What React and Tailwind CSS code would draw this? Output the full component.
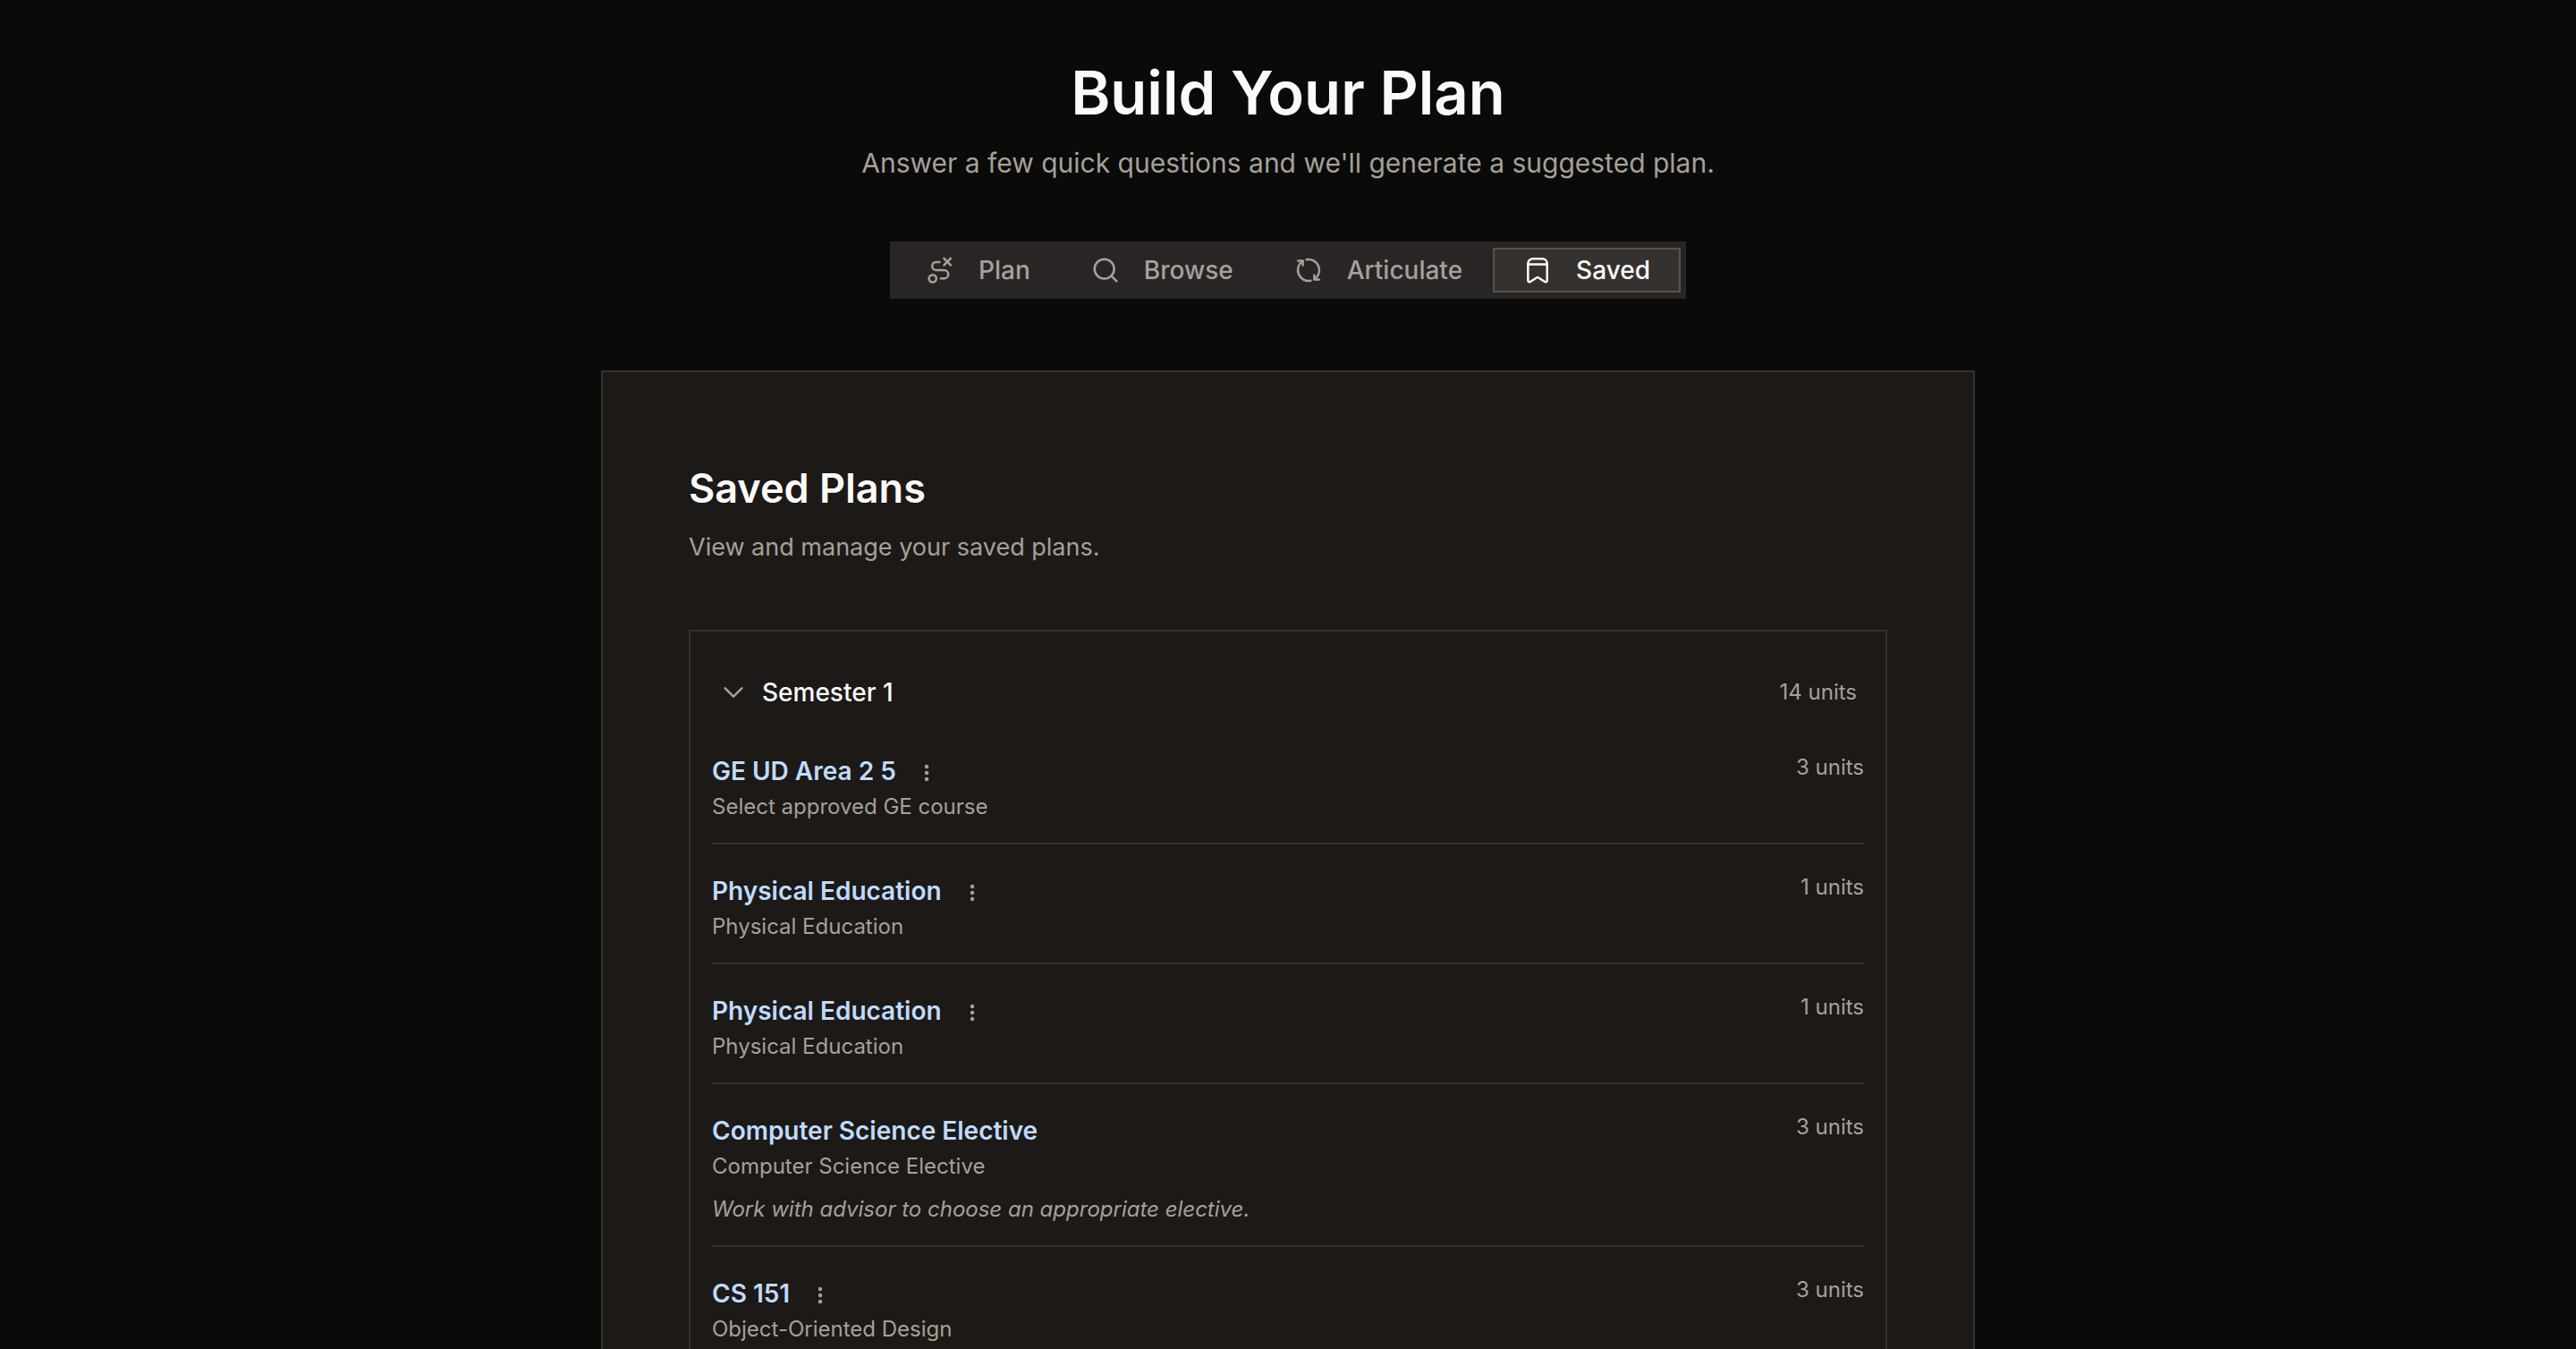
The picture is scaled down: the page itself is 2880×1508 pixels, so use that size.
import { useState } from 'react';
import clsx from 'clsx';

const TABS = [
  { id: 'plan', label: 'Plan', Icon: RouteIcon },
  { id: 'browse', label: 'Browse', Icon: SearchIcon },
  { id: 'articulate', label: 'Articulate', Icon: SyncIcon },
  { id: 'saved', label: 'Saved', Icon: BookmarkIcon },
];

const COURSES = [
  { code: 'GE UD Area 2 5', title: 'Select approved GE course', units: 3, menu: true },
  { code: 'Physical Education', title: 'Physical Education', units: 1, menu: true },
  { code: 'Physical Education', title: 'Physical Education', units: 1, menu: true },
  {
    code: 'Computer Science Elective',
    title: 'Computer Science Elective',
    units: 3,
    note: 'Work with advisor to choose an appropriate elective.',
  },
  { code: 'CS 151', title: 'Object-Oriented Design', units: 3, menu: true },
];

function Svg({ className, children }) {
  return (
    <svg
      viewBox="0 0 24 24"
      fill="none"
      stroke="currentColor"
      strokeWidth="1.9"
      strokeLinecap="round"
      strokeLinejoin="round"
      aria-hidden="true"
      className={className}
    >
      {children}
    </svg>
  );
}

function RouteIcon({ className }) {
  return (
    <Svg className={className}>
      <circle cx="5.8" cy="19" r="3.1" />
      <path d="M11.5 5.2H8.8a3.4 3.4 0 0 0 0 6.8h6.600a3.500 3.500 0 0 1 0 7h-2.800" />
      <path d="M15.3 2.2l5.6 5.6M20.900 2.200l-5.600 5.600" />
    </Svg>
  );
}

function SearchIcon({ className }) {
  return (
    <Svg className={className}>
      <circle cx="11" cy="11" r="8.2" />
      <path d="M17 17l4.3 4.3" />
    </Svg>
  );
}

function SyncIcon({ className }) {
  return (
    <Svg className={className}>
      <path d="M10.2 3.2A9 9 0 0 1 17 19.5" />
      <path d="M16.8 16.2v3.6h4" />
      <path d="M13.8 20.8A9 9 0 0 1 7 4.5" />
      <path d="M3.2 4.2h4v3.6" />
    </Svg>
  );
}

function BookmarkIcon({ className }) {
  return (
    <Svg className={className}>
      <path d="M4 6.500a4 4 0 0 1 4-4h8a4 4 0 0 1 4 4V20.600c0 1.200-1.200 1.700-2.200 1L12.600 18.200a1 1 0 0 0-1.200 0L6.200 21.600c-1 .7-2.200.2-2.200-1Z" />
      <path d="M4 7.2h16" />
    </Svg>
  );
}

function ChevronIcon({ className }) {
  return (
    <Svg className={className}>
      <path d="M5 8.5l7 7 7-7" />
    </Svg>
  );
}

function DotsIcon({ className }) {
  return (
    <svg viewBox="0 0 24 24" fill="currentColor" aria-hidden="true" className={className}>
      <circle cx="12" cy="3.6" r="2.7" />
      <circle cx="12" cy="12" r="2.7" />
      <circle cx="12" cy="20.4" r="2.7" />
    </svg>
  );
}

function CourseRow({ course }) {
  return (
    <li className="flex items-start justify-between border-b-2 border-[#33302d] pt-8 pb-5 last:border-b-0">
      <div>
        <div className="flex h-10 items-center gap-4">
          <h3 className="text-[28px] leading-10 font-semibold text-[#bfdbfe]">{course.code}</h3>
          {course.menu && (
            <button
              type="button"
              aria-label={`Options for ${course.code}`}
              className="flex h-8 w-9 cursor-pointer items-center justify-center pt-1 text-[#a6a09b]"
            >
              <DotsIcon className="size-5" />
            </button>
          )}
        </div>
        <p className="text-2xl leading-10 text-[#a6a09b]">{course.title}</p>
        {course.note && <p className="mt-2 text-2xl leading-10 text-[#a6a09b] italic">{course.note}</p>}
      </div>
      <span className="text-2xl leading-8 text-[#a6a09b]">{course.units} units</span>
    </li>
  );
}

export default function App() {
  const [tab, setTab] = useState('saved');
  const [open, setOpen] = useState(true);

  return (
    <div className="h-screen overflow-hidden bg-[#0a0a08] font-['Inter',sans-serif]">
      <main className="mx-auto max-w-[1536px] pt-16">
        <header className="text-center">
          <h1 className="text-[67px] leading-20 font-semibold text-[#fafaf9]">Build Your Plan</h1>
          <p className="mt-[14px] text-[30px] leading-12 text-[#a6a09b]">
            Answer a few quick questions and we'll generate a suggested plan.
          </p>
        </header>

        {/* Tabs */}
        <div className="mt-16 flex justify-center">
          <nav className="flex h-16 bg-[#2a2525] px-[6px] py-[7px]">
            {TABS.map(({ id, label, Icon }) => (
              <button
                key={id}
                type="button"
                onClick={() => setTab(id)}
                className={clsx(
                  'flex cursor-pointer items-center gap-[27px] border-2 px-8 text-[28px] leading-10 font-medium',
                  tab === id ? 'border-[#57534d] bg-[#35312e] text-[#fafaf9]' : 'border-transparent text-[#a6a09b]'
                )}
              >
                <Icon className="size-8" />
                {label}
              </button>
            ))}
          </nav>
        </div>

        <section className="mt-20 border-2 border-[#33302d] bg-[#1d1916] p-24">
          <h2 className="text-[45px] leading-17 font-semibold text-[#fafaf9]">Saved Plans</h2>
          <p className="mt-3 text-[27px] leading-10 text-[#a6a09b]">View and manage your saved plans.</p>

          {/* Semester */}
          <div className="mt-18 border-2 border-[#33302d] px-6 pt-10 pb-6">
            <button
              type="button"
              aria-expanded={open}
              onClick={() => setOpen(!open)}
              className="flex h-14 w-full cursor-pointer items-center px-2"
            >
              <ChevronIcon className={clsx('size-8 text-[#a6a09b]', !open && '-rotate-90')} />
              <span className="ml-4 text-[28px] leading-10 font-medium text-[#fafaf9]">Semester 1</span>
              <span className="ml-auto text-2xl leading-8 text-[#a6a09b]">14 units</span>
            </button>
            {open && (
              <ul className="mt-2">
                {COURSES.map((course, i) => (
                  <CourseRow key={i} course={course} />
                ))}
              </ul>
            )}
          </div>
        </section>
      </main>
    </div>
  );
}
